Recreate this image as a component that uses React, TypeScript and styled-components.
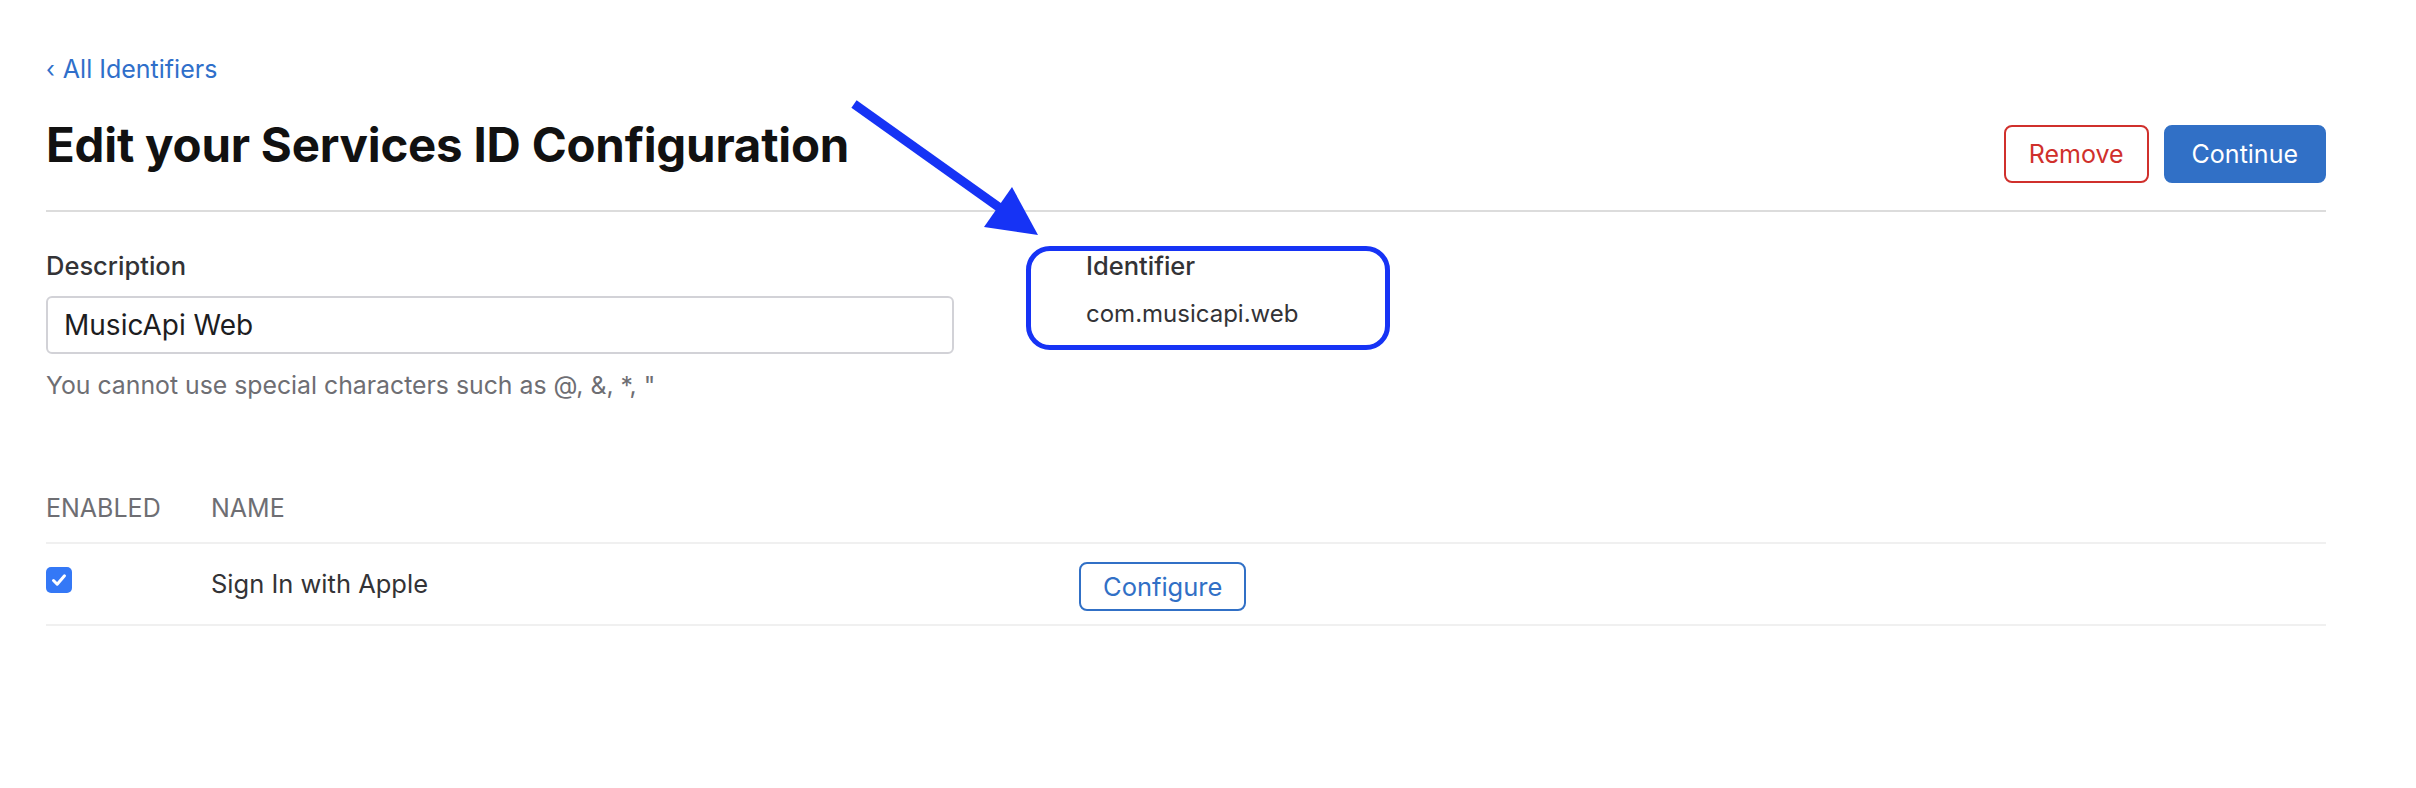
import styled, { createGlobalStyle } from "styled-components";

const GlobalStyle = createGlobalStyle`
  html, body {
    margin: 0;
    padding: 0;
    background: #ffffff;
  }
  body {
    font-family: Inter, "Liberation Sans", Arial, sans-serif;
    color: #1d1d1f;
    -webkit-font-smoothing: antialiased;
  }
  * {
    box-sizing: border-box;
  }
`;

const Page = styled.div`
  position: relative;
  padding: 55px 90px 0 46px;
  min-height: 788px;
`;

const BackLink = styled.a`
  display: inline-flex;
  align-items: center;
  gap: 8px;
  font-size: 25px;
  line-height: 29px;
  color: #2f6fca;
  text-decoration: none;
  cursor: pointer;
`;

const Chevron = styled.span`
  font-size: 23px;
  line-height: 29px;
`;

const Header = styled.div`
  display: flex;
  align-items: center;
  justify-content: space-between;
  margin-top: 41px;
  padding-bottom: 27px;
  border-bottom: 2px solid #dcdcdc;
`;

const Title = styled.h1`
  margin: -18px 0 0;
  font-size: 47.4px;
  line-height: 56px;
  font-weight: 700;
  color: #111111;
  letter-spacing: -0.2px;
`;

const Actions = styled.div`
  display: flex;
  gap: 15px;
`;

const Button = styled.button<{ $variant: "danger" | "primary" }>`
  height: 58px;
  padding: 0 ${({ $variant }) => ($variant === "danger" ? "23px" : "26px")};
  border-radius: 8px;
  font-family: inherit;
  font-size: 25px;
  cursor: pointer;
  border: 2px solid
    ${({ $variant }) => ($variant === "danger" ? "#d0302c" : "#3170c6")};
  background: ${({ $variant }) =>
    $variant === "danger" ? "#ffffff" : "#3170c6"};
  color: ${({ $variant }) => ($variant === "danger" ? "#d0302c" : "#ffffff")};
`;

const Fields = styled.div`
  display: grid;
  grid-template-columns: 908px 1fr;
  column-gap: 132px;
  margin-top: 39px;
`;

const Field = styled.div`
  position: relative;
  display: flex;
  flex-direction: column;
`;

const Label = styled.label`
  font-size: 25.5px;
  line-height: 30px;
  font-weight: 500;
  color: #333336;
`;

const TextInput = styled.input`
  margin-top: 15px;
  height: 58px;
  width: 100%;
  padding: 0 16px;
  border: 2px solid #d2d2d7;
  border-radius: 6px;
  font-family: inherit;
  font-size: 28px;
  color: #1d1d1f;
  outline: none;
`;

const Hint = styled.p`
  margin: 16px 0 0;
  font-size: 24.8px;
  line-height: 30px;
  color: #6e6e73;
`;

const Value = styled.div`
  margin-top: 18px;
  font-size: 24px;
  line-height: 30px;
  color: #333336;
`;

const Annotation = styled.div`
  position: absolute;
  left: -60px;
  top: -5px;
  width: 364px;
  height: 104px;
  border: 5px solid #1633f5;
  border-radius: 24px;
  pointer-events: none;
`;

const Arrow = styled.svg`
  position: absolute;
  left: 830px;
  top: 90px;
  pointer-events: none;
`;

const Table = styled.div`
  margin-top: 94px;
`;

const Row = styled.div<{ $head?: boolean }>`
  display: grid;
  grid-template-columns: 165px 868px 1fr;
  align-items: center;
  border-bottom: 2px solid #f0f0f0;
  min-height: ${({ $head }) => ($head ? "48px" : "82px")};
  padding-bottom: ${({ $head }) => ($head ? "20px" : "0")};
`;

const HeadCell = styled.div`
  font-size: 25px;
  line-height: 28px;
  color: #6e6e73;
  text-transform: uppercase;
`;

const Cell = styled.div`
  font-size: 25.5px;
  line-height: 30px;
  color: #333336;
`;

const Check = styled.span`
  display: flex;
  align-items: center;
  justify-content: center;
  width: 26px;
  height: 26px;
  margin-top: -8px;
  border-radius: 5px;
  background: #3478f6;
`;

const OutlineButton = styled.button`
  justify-self: start;
  height: 49px;
  padding: 0 22px;
  border: 2px solid #3170c6;
  border-radius: 8px;
  background: #ffffff;
  color: #3170c6;
  font-family: inherit;
  font-size: 25.5px;
  cursor: pointer;
  margin-top: 4px;
`;

export default function App() {
  return (
    <>
      <GlobalStyle />
      <Page>
        <BackLink>
          <Chevron>‹</Chevron>
          All Identifiers
        </BackLink>

        <Header>
          <Title>Edit your Services ID Configuration</Title>
          <Actions>
            <Button $variant="danger">Remove</Button>
            <Button $variant="primary">Continue</Button>
          </Actions>
        </Header>

        <Fields>
          <Field>
            <Label htmlFor="description">Description</Label>
            <TextInput id="description" defaultValue="MusicApi Web" />
            <Hint>You cannot use special characters such as @, &amp;, *, "</Hint>
          </Field>
          <Field>
            <Label>Identifier</Label>
            <Value>com.musicapi.web</Value>
            <Annotation />
          </Field>
        </Fields>

        <Table>
          <Row $head>
            <HeadCell>Enabled</HeadCell>
            <HeadCell>Name</HeadCell>
            <div />
          </Row>
          <Row>
            <Check>
              <svg width="18" height="18" viewBox="0 0 18 18">
                <path
                  d="M3.5 9.5 L7.2 13.2 L14.5 4.8"
                  fill="none"
                  stroke="#ffffff"
                  strokeWidth="3"
                  strokeLinecap="round"
                  strokeLinejoin="round"
                />
              </svg>
            </Check>
            <Cell>Sign In with Apple</Cell>
            <OutlineButton>Configure</OutlineButton>
          </Row>
        </Table>

        <Arrow width="230" height="160" viewBox="0 0 230 160">
          <line
            x1="24"
            y1="14"
            x2="170"
            y2="118"
            stroke="#1633f5"
            strokeWidth="9"
          />
          <polygon points="208,145 182,97 154,137" fill="#1633f5" />
        </Arrow>
      </Page>
    </>
  );
}
